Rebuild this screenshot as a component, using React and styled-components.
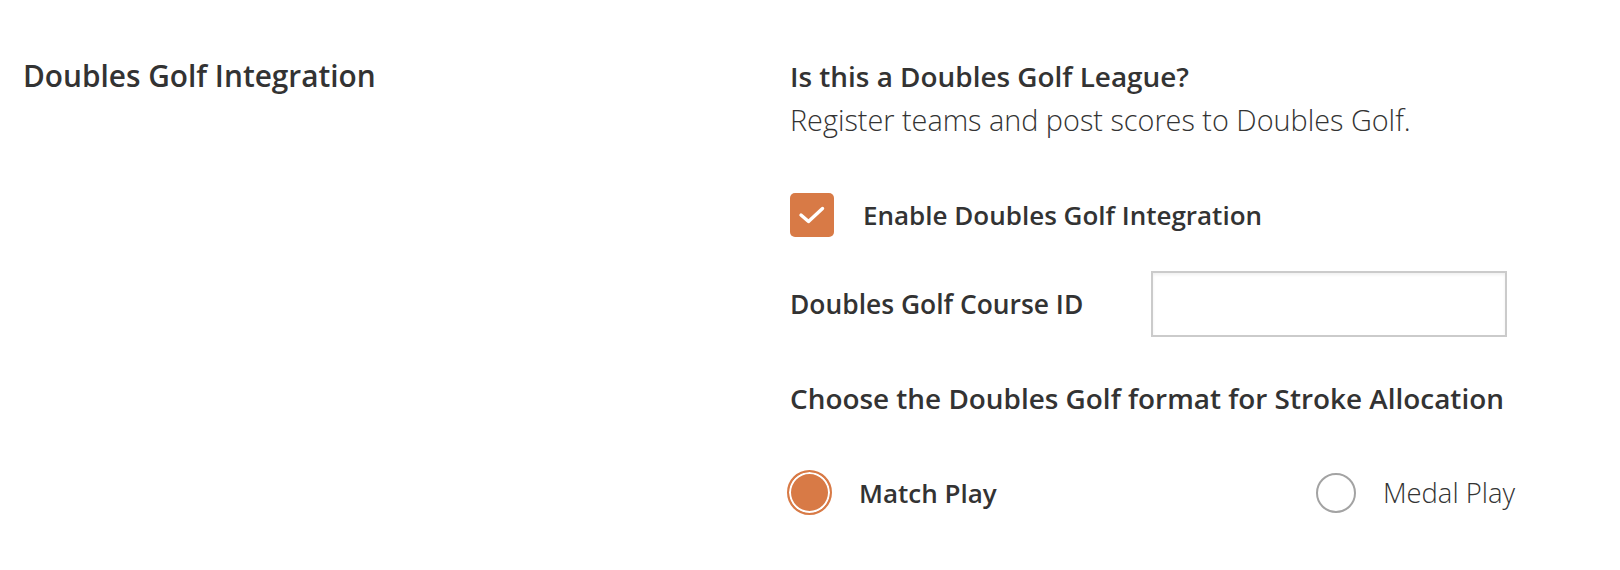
import React, { useState } from "react";
import styled, { createGlobalStyle } from "styled-components";

const GlobalStyle = createGlobalStyle`
  body {
    margin: 0;
    background: #fff;
    font-family: "Open Sans", Lato, sans-serif;
    color: #333;
  }
`;

function App() {
  const [enabled, setEnabled] = useState(true);
  const [courseId, setCourseId] = useState("");
  const [format, setFormat] = useState("match");

  return (
    <>
      <GlobalStyle />
      <Section>
        <SectionTitle>Doubles Golf Integration</SectionTitle>
        <Settings>
          <Question>Is this a Doubles Golf League?</Question>
          <Help>Register teams and post scores to Doubles Golf.</Help>

          <CheckRow onClick={() => setEnabled(!enabled)}>
            <CheckBox checked={enabled}>
              {enabled && (
                <svg width="28" height="20" viewBox="0 0 28 20">
                  <path
                    d="M3 10 L10.5 16.5 L24.5 3.5"
                    fill="none"
                    stroke="#fff"
                    strokeWidth="3.4"
                    strokeLinecap="round"
                    strokeLinejoin="round"
                  />
                </svg>
              )}
            </CheckBox>
            <CheckLabel>Enable Doubles Golf Integration</CheckLabel>
          </CheckRow>

          <FieldRow>
            <FieldLabel>Doubles Golf Course ID</FieldLabel>
            <TextInput
              type="text"
              value={courseId}
              onChange={(e) => setCourseId(e.target.value)}
            />
          </FieldRow>

          <Question>Choose the Doubles Golf format for Stroke Allocation</Question>

          <RadioRow>
            <RadioOption onClick={() => setFormat("match")}>
              <Radio selected={format === "match"} />
              <RadioLabel selected={format === "match"}>Match Play</RadioLabel>
            </RadioOption>
            <RadioOption onClick={() => setFormat("medal")}>
              <Radio selected={format === "medal"} />
              <RadioLabel selected={format === "medal"}>Medal Play</RadioLabel>
            </RadioOption>
          </RadioRow>
        </Settings>
      </Section>
    </>
  );
}

export default App;

const Section = styled.section`
  display: grid;
  grid-template-columns: 767px 726px;
  padding: 58px 0 0 23px;
`;

const SectionTitle = styled.h2`
  margin: 0;
  font-size: 29.8px;
  line-height: 36px;
  font-weight: 600;
  color: #333;
`;

const Settings = styled.div`
  display: flex;
  flex-direction: column;
`;

const Question = styled.div`
  font-size: 27.9px;
  line-height: 36px;
  font-weight: 600;
  color: #333;
`;

const Help = styled.div`
  font-size: 28.8px;
  line-height: 36px;
  font-weight: 300;
  color: #333;
  margin-top: 8px;
  margin-bottom: 55px;
`;

const CheckRow = styled.label`
  display: flex;
  align-items: center;
  gap: 29px;
  cursor: pointer;
  margin-bottom: 34px;
`;

const CheckBox = styled.span`
  width: 44px;
  height: 44px;
  border-radius: 5px;
  display: flex;
  align-items: center;
  justify-content: center;
  background: ${(p) => (p.checked ? "#d87a46" : "#fff")};
  border: ${(p) => (p.checked ? "none" : "2px solid #999")};
  box-sizing: border-box;
`;

const CheckLabel = styled.span`
  font-size: 26px;
  font-weight: 600;
`;

const FieldRow = styled.div`
  display: grid;
  grid-template-columns: 361px 356px;
  align-items: center;
  margin-bottom: 43px;
`;

const FieldLabel = styled.span`
  font-size: 26.4px;
  font-weight: 600;
`;

const TextInput = styled.input`
  height: 66px;
  box-sizing: border-box;
  border: 2px solid #cbcbcb;
  box-shadow: inset 0 2px 3px rgba(0, 0, 0, 0.06);
  border-radius: 0;
  outline: none;
  padding: 0 14px;
  font-size: 22px;
  font-family: inherit;
`;

const RadioRow = styled.div`
  display: flex;
  justify-content: space-between;
  align-items: center;
  margin-top: 54px;
  width: 725px;
`;

const RadioOption = styled.label`
  display: flex;
  align-items: center;
  gap: 27px;
  cursor: pointer;
`;

const Radio = styled.span`
  width: ${(p) => (p.selected ? 45 : 40)}px;
  height: ${(p) => (p.selected ? 45 : 40)}px;
  border-radius: 50%;
  box-sizing: border-box;
  border: 2px solid ${(p) => (p.selected ? "#d87a46" : "#a3a3a3")};
  background: ${(p) => (p.selected ? "#d87a46" : "#fff")};
  box-shadow: ${(p) => (p.selected ? "inset 0 0 0 2px #fff" : "none")};
  margin-left: ${(p) => (p.selected ? -3 : 0)}px;
`;

const RadioLabel = styled.span`
  font-size: ${(p) => (p.selected ? 26 : 27.4)}px;
  font-weight: ${(p) => (p.selected ? 600 : 300)};
  color: #333;
`;
